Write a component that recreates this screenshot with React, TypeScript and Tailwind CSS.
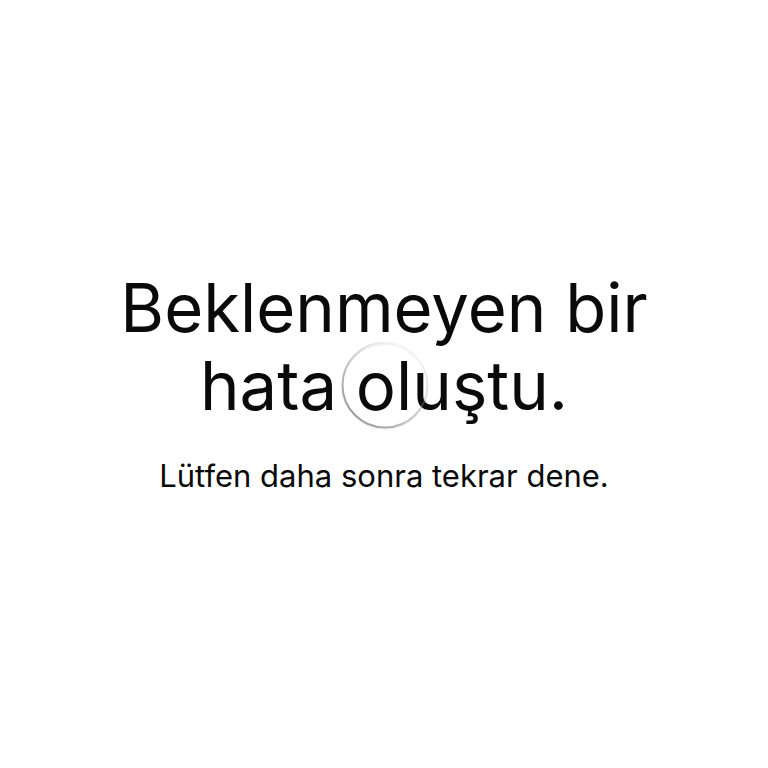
export default function App() {
  return (
    <main
      className="relative flex min-h-screen w-full flex-col items-center justify-center bg-white px-8 pb-[6px] text-center text-[#0a0a0a]"
      style={{ fontFamily: "Inter, 'Noto Sans', sans-serif" }}
    >
      <h1 className="max-w-[580px] text-[67px] font-normal leading-[78px]">
        Beklenmeyen bir hata oluştu.
      </h1>
      <p className="mt-[33px] text-[31px] leading-[36px]">Lütfen daha sonra tekrar dene.</p>

      {/* yükleniyor göstergesi */}
      <div className="pointer-events-none absolute inset-0 flex items-center justify-center">
        <svg width="92" height="92" viewBox="0 0 92 92" className="translate-x-[1px] translate-y-[1px]">
          <defs>
            <linearGradient id="spin" x1="0.85" y1="0.1" x2="0.15" y2="0.9">
              <stop offset="0" stopColor="#9a9a9a" stopOpacity="0" />
              <stop offset="0.35" stopColor="#9a9a9a" stopOpacity="0.3" />
              <stop offset="1" stopColor="#8a8a8a" stopOpacity="0.85" />
            </linearGradient>
          </defs>
          <circle cx="46" cy="47.5" r="42.5" fill="none" stroke="#000" strokeOpacity="0.05" strokeWidth="2" />
          <circle cx="46" cy="46" r="42.5" fill="none" stroke="url(#spin)" strokeWidth="2" />
        </svg>
      </div>
    </main>
  );
}
